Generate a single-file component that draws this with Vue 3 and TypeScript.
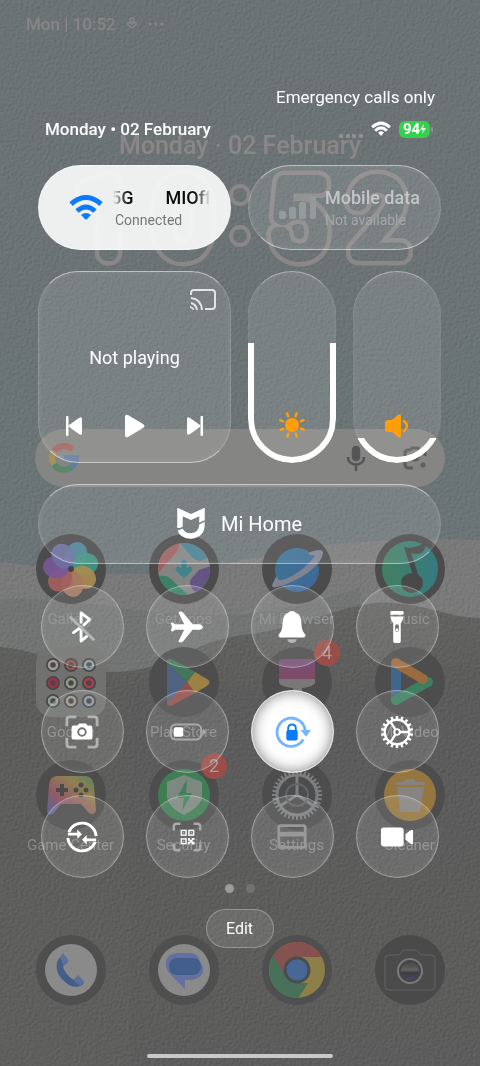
<script setup lang="ts">
import { computed, ref } from 'vue'

const brightness = ref<number>(63)
const volume = ref<number>(13)
const brightnessFill = computed(() => ({ height: `${brightness.value}%` }))
const volumeFill = computed(() => ({ height: `${volume.value}%` }))

interface Digit { char: string; x: number }
const digits: Digit[] = [
  { char: '1', x: 105 },
  { char: '0', x: 183 },
  { char: '5', x: 297 },
  { char: '2', x: 378 },
]
const teeth = Array.from({ length: 36 }, (_, i) => i * 10)
const smallTeeth = Array.from({ length: 18 }, (_, i) => i * 20)
const rays = Array.from({ length: 8 }, (_, i) => i * 45 + 22)
const petals = [
  { angle: 20, color: '#4f8799' },
  { angle: 72, color: '#3f9382' },
  { angle: 123, color: '#a98c51' },
  { angle: 174, color: '#a67860' },
  { angle: 226, color: '#a2605f' },
  { angle: 277, color: '#7a5796' },
  { angle: 328, color: '#6a70a0' },
]
const minis = [
  { x: 17, y: 18, color: '#a59a99' }, { x: 35, y: 18, color: '#96544f' }, { x: 53, y: 18, color: '#8b9aa2' },
  { x: 17, y: 36, color: '#9c3148' }, { x: 35, y: 36, color: '#909b88' }, { x: 53, y: 36, color: '#a83f50' },
  { x: 17, y: 54, color: '#8d9f98' }, { x: 35, y: 54, color: '#a29789' }, { x: 53, y: 54, color: '#8a97a8' },
]
</script>

<template>
  <main class="screen">
    <svg class="wallpaper" viewBox="0 0 480 1066" preserveAspectRatio="none" aria-hidden="true">
      <defs>
        <linearGradient id="sky" x1="0" y1="0" x2="0" y2="1">
          <stop offset="0" stop-color="#697173" /><stop offset="1" stop-color="#6a7475" />
        </linearGradient>
        <linearGradient id="hillNear" x1="0" y1="0" x2="0" y2="1">
          <stop offset="0" stop-color="#616160" /><stop offset=".2" stop-color="#5b5b5a" /><stop offset="1" stop-color="#5d5d5c" />
        </linearGradient>
        <filter id="paper" x="0" y="0" width="100%" height="100%" color-interpolation-filters="sRGB">
          <feTurbulence type="fractalNoise" baseFrequency=".36" numOctaves="2" seed="4" result="n" />
          <feDiffuseLighting in="n" surfaceScale="1" diffuseConstant="1" lighting-color="#c6c6c6">
            <feDistantLight azimuth="225" elevation="45" />
          </feDiffuseLighting>
        </filter>
      </defs>
      <rect width="480" height="1066" fill="url(#sky)" />
      <path d="M0 562C40 566 75 573 120 574C210 576 255 552 325 545C370 540 430 538 480 540V1066H0Z" fill="#777877" />
      <path d="M0 599C70 596 120 612 190 614C260 619 300 606 360 588V1066H0Z" fill="#707372" />
      <path d="M0 647C45 650 70 672 115 672C170 671 190 640 250 634C310 626 350 600 390 603C430 605 450 618 480 618V1066H0Z" fill="url(#hillNear)" />
      <path d="M130 680C220 665 250 710 330 695C390 680 420 660 480 668V1066H130Z" fill="#5a5a59" opacity=".5" />
      <rect class="grain" width="480" height="1066" filter="url(#paper)" />
    </svg>

    <section class="home" aria-label="Home screen">
      <div class="home-status">
        <span>Mon | 10:52</span>
        <svg width="12" height="14" viewBox="0 0 12 14" fill="none" stroke="currentColor" stroke-width="1.5"><circle cx="6" cy="3" r="2" /><path d="M6 11L2 8C1 5 4 5 6 7C8 5 11 5 10 8Z" /></svg>
        <svg width="16" height="4" viewBox="0 0 16 4" fill="currentColor"><circle cx="2" cy="2" r="1.5" /><circle cx="8" cy="2" r="1.5" /><circle cx="14" cy="2" r="1.5" /></svg>
      </div>
      <p class="home-date">Monday · 02 February</p>
      <svg class="clock" viewBox="0 0 480 118" role="img" aria-label="10:52">
        <defs>
          <mask id="hollow" maskUnits="userSpaceOnUse" x="0" y="0" width="480" height="118">
            <rect width="480" height="118" fill="#fff" />
            <text v-for="d in digits" :key="d.char" class="digit digit-inner" :x="d.x" y="95">{{ d.char }}</text>
          </mask>
        </defs>
        <g mask="url(#hollow)">
          <text v-for="d in digits" :key="d.char" class="digit digit-outer" :x="d.x" y="95">{{ d.char }}</text>
        </g>
        <g fill="none" stroke="#8a8786" stroke-width="4"><circle cx="240" cy="37" r="9" /><circle cx="240" cy="78" r="9" /></g>
      </svg>

      <label class="search">
        <svg width="32" height="32" viewBox="0 0 32 32" fill="none" stroke-width="6">
          <path d="M24.500 7.500A12 12 0 0 0 6 9.500" stroke="#a4645e" /><path d="M6 9.500A12 12 0 0 0 6 22.500" stroke="#a5935a" />
          <path d="M6 22.500A12 12 0 0 0 23 25.500" stroke="#598767" /><path d="M23 25.500A12 12 0 0 0 28 16H16" stroke="#617d9e" />
        </svg>
        <input type="search" aria-label="Search" />
        <svg class="mic" width="20" height="26" viewBox="0 0 20 26" fill="none" stroke="#555" stroke-width="2.500"><rect x="7" y="2" width="6" height="13" rx="3" fill="#555" /><path d="M2 12C2 22 18 22 18 12M10 20V26" /></svg>
        <svg width="26" height="26" viewBox="0 0 26 26" fill="none" stroke="#5c5c5b" stroke-width="3"><path d="M3 11V8Q3 5 6 5H8L10 3H16L18 5H20Q23 5 23 8V11M3 15V19Q3 23 7 23H11" /><circle cx="13" cy="12" r="3" fill="#5c5c5b" /><circle cx="21" cy="20" r="1" /></svg>
      </label>

      <div class="apps">
        <button class="app" type="button">
          <svg viewBox="0 0 70 70"><circle cx="35" cy="35" r="35" fill="#4b4b4b" />
            <ellipse v-for="p in petals" :key="p.angle" cx="35" cy="20" rx="11" ry="13" :fill="p.color" opacity=".93" :transform="`rotate(${p.angle} 35 35)`" />
            <circle cx="35" cy="35" r="3" fill="#484353" /></svg>
          <span>Gallery</span>
        </button>
        <button class="app" type="button">
          <svg viewBox="0 0 70 70"><defs><clipPath id="disc"><circle cx="35" cy="35" r="26" /></clipPath></defs><circle cx="35" cy="35" r="35" fill="#4b4b4b" />
            <g clip-path="url(#disc)"><rect width="70" height="70" fill="#858484" /><path d="M8 40V8H30Q31 15 25 21L14 33Q11 38 8 40Z" fill="#9b605f" /><path d="M30 8L42 22Q49 29 54 26L66 20V0Z" fill="#487f91" /><path d="M65 31L50 36L42 45Q39 50 45 57L62 60Z" fill="#655384" /><path d="M5 44Q14 39 21 44L40 62L20 66Z" fill="#3c8167" /></g>
            <path d="M35 28V40M29 35L35 41L41 35" stroke="#40848b" stroke-width="5" fill="none" stroke-linecap="round" stroke-linejoin="round" /></svg>
          <span>GetApps</span>
        </button>
        <button class="app" type="button">
          <svg viewBox="0 0 70 70"><defs><linearGradient id="planet" x1="0" y1="0" x2="1" y2="1"><stop stop-color="#3d7491" /><stop offset="1" stop-color="#3f6799" /></linearGradient></defs><circle cx="35" cy="35" r="35" fill="#4b4b4b" />
            <circle cx="35" cy="36" r="22" fill="url(#planet)" /><path d="M46 19C54 15 62 15 61 19C60 30 42 44 22 51C13 54 8 55 11 49Q12 45 15 42C16 47 18 47 23 45C36 40 47 30 53 22Q50 21 48 21Z" fill="#7f8291" /></svg>
          <span>Mi Browser</span>
        </button>
        <button class="app" type="button">
          <svg viewBox="0 0 70 70"><defs><linearGradient id="tune"><stop stop-color="#447f61" /><stop offset="1" stop-color="#367a82" /></linearGradient></defs><circle cx="35" cy="35" r="35" fill="#4b4b4b" /><circle cx="35" cy="35" r="28" fill="url(#tune)" />
            <ellipse cx="37" cy="49" rx="11" ry="10" fill="#484948" /><path d="M41 51L29 13Q37 15 43 12Q47 10 51 9Q50 17 46 19Q41 21 36 19L47 52Z" fill="#484948" /></svg>
          <span>Music</span>
        </button>
        <button class="app" type="button">
          <svg viewBox="0 0 70 70"><rect width="70" height="70" rx="16" fill="#717170" /><g v-for="m in minis" :key="`${m.x}-${m.y}`"><circle :cx="m.x" :cy="m.y" r="7" fill="#474747" /><circle :cx="m.x" :cy="m.y" r="4" fill="none" :stroke="m.color" stroke-width="2.500" /></g></svg>
          <span>Google</span>
        </button>
        <button class="app" type="button">
          <svg viewBox="0 0 70 70"><circle cx="35" cy="35" r="35" fill="#4d4d4d" /><path d="M18 12L38 35L18 58Z" fill="#4d6380" /><path d="M18 15Q18 9 25 13L46 25L38 35Z" fill="#44765a" /><path d="M46 25L58 32Q63 35 58 39L46 46L38 35Z" fill="#9d8143" /><path d="M38 35L46 46L24 58Q18 61 18 56Z" fill="#92504d" /></svg>
          <span>Play Store</span>
        </button>
        <button class="app" type="button">
          <svg viewBox="0 0 70 70"><defs><linearGradient id="theme" x1="0" y1="0" x2="0" y2="1"><stop stop-color="#765278" /><stop offset="1" stop-color="#7e4a63" /></linearGradient></defs><circle cx="35" cy="35" r="35" fill="#4d4d4d" /><path d="M17 15Q17 12 20 12H50Q53 12 53 15V32H17Z" fill="url(#theme)" /><path d="M17 32H53V36Q51 40 40 41V56Q35 62 31 56V41Q19 40 17 36Z" fill="#797878" /></svg>
          <i class="badge">4</i>
        </button>
        <button class="app" type="button">
          <svg viewBox="0 0 70 70"><circle cx="35" cy="35" r="35" fill="#4d4d4d" /><g fill="none" stroke-width="10" stroke-linecap="round"><path d="M21 17V53" stroke="#3f668b" /><path d="M21 53L53 35" stroke="#3e7f60" /><path d="M21 16L48 32" stroke="#996b3e" /></g></svg>
          <span>Mi Video</span>
        </button>
        <button class="app" type="button">
          <svg viewBox="0 0 70 70"><defs><linearGradient id="pad" x1="0" y1="1" x2="1" y2="0"><stop stop-color="#54679a" /><stop offset=".35" stop-color="#925b66" /><stop offset=".7" stop-color="#918052" /><stop offset="1" stop-color="#52815e" /></linearGradient></defs><circle cx="35" cy="35" r="35" fill="#4d4d4d" /><path d="M20 16H50Q57 17 58 25L60 51Q57 57 52 52L45 44H25L18 53Q12 57 11 51L13 25Q14 17 20 16Z" fill="url(#pad)" /><path d="M26 24V36M20 30H32" stroke="#4b4b4b" stroke-width="4" /><g fill="#4b4b4b"><circle cx="45" cy="25" r="2.500" /><circle cx="45" cy="35" r="2.500" /><circle cx="40" cy="30" r="2.500" /><circle cx="50" cy="30" r="2.500" /></g></svg>
          <span>Game Center</span>
        </button>
        <button class="app" type="button">
          <svg viewBox="0 0 70 70"><circle cx="35" cy="35" r="35" fill="#4d4d4d" /><circle cx="35" cy="35" r="26" fill="#3f7d55" /><path d="M35 15L53 22V38Q50 48 35 55Q20 48 18 38V22Z" fill="#7d8880" /><path d="M38 19L28 38H35L33 51L43 33H37Z" fill="#41805a" /></svg>
          <i class="badge">2</i>
          <span>Security</span>
        </button>
        <button class="app" type="button">
          <svg viewBox="0 0 70 70"><circle cx="35" cy="35" r="35" fill="#4d4d4d" /><g stroke="#7d7f80" fill="none" stroke-width="3"><circle cx="35" cy="35" r="20" /><path d="M35 35V15M35 35L18 46M35 35L52 46" /><circle cx="35" cy="35" r="11" stroke="#626466" stroke-width="2" /><path v-for="t in teeth" :key="t" d="M35 10V15" stroke-width="2" :transform="`rotate(${t} 35 35)`" /></g></svg>
          <span>Settings</span>
        </button>
        <button class="app" type="button">
          <svg viewBox="0 0 70 70"><circle cx="35" cy="35" r="35" fill="#4d4d4d" /><circle cx="35" cy="35" r="26" fill="#957640" /><path d="M22 27H49L45 51Q45 52 43 52H27Q25 52 25 50Z" fill="#868481" /><path d="M22 22H29L31 19H39L41 22H48Q50 22 50 25H21Q21 22 22 22Z" fill="#868481" /></svg>
          <span>Cleaner</span>
        </button>
      </div>

      <nav class="dock" aria-label="Dock">
        <button class="app" type="button" aria-label="Phone">
          <svg viewBox="0 0 70 70"><circle cx="35" cy="35" r="35" fill="#4f4f4f" /><circle cx="35" cy="35" r="26" fill="#8a8a8a" /><path d="M27 20C18 25 19 38 27 45C34 53 43 54 48 48L42 42L38 45C32 42 28 36 27 31L32 27Z" fill="#435f89" /><path d="M27 18L33 26L28 31L24 23ZM42 40L48 46L44 51L37 45Z" fill="#5f6f9b" /></svg>
        </button>
        <button class="app" type="button" aria-label="Messages">
          <svg viewBox="0 0 70 70"><circle cx="35" cy="35" r="35" fill="#4f4f4f" /><circle cx="35" cy="35" r="26" fill="#8a8a8a" /><path d="M27 18H42Q50 19 51 27Q56 32 53 39Q49 45 40 45H36V54L22 40Q16 35 17 26Q19 19 27 18Z" fill="#6470a0" /><rect x="20" y="23" width="32" height="17" rx="8" fill="#425f8b" /></svg>
        </button>
        <button class="app" type="button" aria-label="Chrome">
          <svg viewBox="0 0 70 70"><defs><clipPath id="wheel"><circle cx="35" cy="35" r="28" /></clipPath></defs><circle cx="35" cy="35" r="35" fill="#4f4f4f" /><g clip-path="url(#wheel)"><rect width="70" height="70" fill="#8d7f48" /><path d="M11 21L0 0H70V22H35L23 42Z" fill="#855250" /><path d="M11 20L24 42L35 48H46L32 70H0V10Z" fill="#48715a" /></g><circle cx="35" cy="35" r="12" fill="#476894" stroke="#494d52" stroke-width="3" /></svg>
        </button>
        <button class="app" type="button" aria-label="Camera">
          <svg viewBox="0 0 70 70"><defs><linearGradient id="lens" x1="0" y1="0" x2="0" y2="1"><stop stop-color="#454545" /><stop offset=".45" stop-color="#626262" /><stop offset=".6" stop-color="#3c3c42" /><stop offset="1" stop-color="#4e4765" /></linearGradient></defs><circle cx="35" cy="35" r="35" fill="#4a4a4a" /><path d="M14 20H22Q25 20 26 18L28 15H42L44 18Q45 20 48 20H56Q60 20 60 24V51Q60 55 56 55H14Q10 55 10 51V24Q10 20 14 20Z" fill="#4b4b4b" stroke="#636363" /><circle cx="35" cy="36" r="12" fill="#444" stroke="#777a80" stroke-width="2" /><circle cx="35" cy="36" r="9" fill="url(#lens)" /></svg>
        </button>
      </nav>
      <div class="gesture-bar"></div>
    </section>

    <section class="center" aria-label="Control center">
      <p class="carrier">Emergency calls only</p>
      <header class="topline">
        <span class="today">Monday • 02 February</span>
        <span class="system">
          <svg class="nosim" width="24" height="6" viewBox="0 0 24 6" fill="#8d9192"><rect width="4" height="4" rx="1" /><rect x="7" width="4" height="4" rx="1" /><rect x="13" width="4" height="4" rx="1" /><rect x="20" width="4" height="4" rx="1" /></svg>
          <svg width="20" height="16" viewBox="0 0 34 26" fill="none" stroke="#fff" stroke-width="5"><path d="M2 10Q17 -4 32 10M7 16Q17 6 27 16" /><path d="M12 19Q17 15 22 19L17 25Z" fill="#fff" stroke="none" /></svg>
          <span class="battery">94<svg width="6" height="10" viewBox="0 0 6 10" fill="#fff"><path d="M4 0L0 6H3L2 10L6 4H3Z" /></svg></span>
        </span>
      </header>

      <div class="tiles">
        <button class="tile pill wifi" type="button" aria-pressed="true">
          <svg width="34" height="26" viewBox="0 0 34 26" fill="none" stroke="#0a7bff" stroke-width="5"><path d="M2 9Q17 -4 32 9M8 16Q17 8 26 16" /><path d="M12 20Q17 16 22 20L18 24Q17 25 16 24Z" fill="#0a7bff" stroke="none" /></svg>
          <span class="words"><span class="marquee"><b>5G</b><b>MIOff</b></span><small>Connected</small></span>
        </button>
        <button class="tile pill mobile" type="button" aria-pressed="false">
          <svg width="38" height="26" viewBox="0 0 38 26" fill="#959a9b"><rect y="16" width="7" height="8" rx="2" /><rect x="10" y="12" width="7" height="12" rx="2" /><rect x="20" y="7" width="7" height="17" rx="2" /><rect x="31" y="1" width="6" height="23" rx="2" /></svg>
          <span class="words"><b>Mobile data</b><small>Not available</small></span>
        </button>

        <div class="tile media">
          <button class="cast" type="button" aria-label="Cast">
            <svg width="26" height="22" viewBox="0 0 26 22" fill="none" stroke="#e3e5e5" stroke-width="2"><path d="M1 6V4Q1 1 4 1H22Q25 1 25 4V17Q25 20 22 20H15M1 9Q11 10 12 21M1 14Q6 15 7 21" /><path d="M0 17Q4 18 4 21H3Q2 19 0 19Z" fill="#e3e5e5" stroke="none" /></svg>
          </button>
          <p>Not playing</p>
          <div class="controls">
            <button type="button" aria-label="Previous"><svg width="16" height="20" viewBox="0 0 16 20" fill="#fff"><rect width="2.500" height="20" rx="1" /><path d="M3 9L13 2Q16 0 16 3V17Q16 20 13 18L3 11Q2 10 3 9Z" /></svg></button>
            <button type="button" aria-label="Play"><svg width="20" height="24" viewBox="0 0 20 24" fill="#fff"><path d="M0 3Q0 0 3 1L18 10Q21 12 18 14L3 23Q0 24 0 21Z" /></svg></button>
            <button type="button" aria-label="Next"><svg width="16" height="20" viewBox="0 0 16 20" fill="#fff"><rect x="13.500" width="2.500" height="20" rx="1" /><path d="M13 9L3 2Q0 0 0 3V17Q0 20 3 18L13 11Q14 10 13 9Z" /></svg></button>
          </div>
        </div>
        <label class="tile slider">
          <span class="fill" :style="brightnessFill"><span class="rim"></span></span>
          <svg width="28" height="28" viewBox="0 0 28 28" fill="#ff9d0a"><circle cx="14" cy="14" r="7" /><path v-for="r in rays" :key="r" d="M14 1.500V4.500" stroke="#ff9d0a" stroke-width="2.500" stroke-linecap="round" :transform="`rotate(${r} 14 14)`" /></svg>
          <input v-model.number="brightness" type="range" min="0" max="100" aria-label="Brightness" />
        </label>
        <label class="tile slider">
          <span class="fill" :style="volumeFill"><span class="rim"></span></span>
          <svg width="24" height="26" viewBox="0 0 24 26" fill="#ff9d0a"><path d="M3 7H7L13 2Q16 0 16 3V22Q16 26 13 24L7 19H3Q0 19 0 16V10Q0 7 3 7Z" /><path d="M19 8Q25 13 19 18" fill="none" stroke="#ff9d0a" stroke-width="2.500" stroke-linecap="round" /></svg>
          <input v-model.number="volume" type="range" min="0" max="100" aria-label="Volume" />
        </label>

        <button class="tile mihome" type="button">
          <svg width="28" height="32" viewBox="0 0 28 32" fill="none" stroke="#fff" stroke-width="5.500"><path d="M3 20V4L14 9L25 4V14" /><path d="M3 21Q5 28 14 28Q25 27 25 16V13" /><path d="M0 22L7 19M21 16L28 13" stroke="#787f81" stroke-width="1.500" /></svg>
          <span>Mi Home</span>
        </button>

        <button class="tile round" type="button" aria-label="Bluetooth"><svg viewBox="0 0 36 36" fill="none" stroke="#fff" stroke-width="3" stroke-linejoin="round"><path d="M17 13V3L26 10L20 16M9 24L17 18M17 21V33L23 28" stroke-linecap="round" /><path d="M5 7L31 32" stroke="#b5b6b6" /></svg></button>
        <button class="tile round" type="button" aria-label="Airplane mode"><svg viewBox="0 0 36 36" fill="#fff"><path d="M1 14Q3 12 5 15H15L9 3Q11 0 14 3L24 15H32Q38 18 32 21H24L14 33Q11 36 9 33L15 21H5Q3 24 1 22L2 18Z" /></svg></button>
        <button class="tile round" type="button" aria-label="Silent mode"><svg viewBox="0 0 36 36" fill="#fff"><path d="M18 1Q21 1 22 3Q28 5 28 14Q28 22 32 26Q33 29 30 29H6Q3 29 4 26Q8 22 8 14Q8 5 14 3Q15 1 18 1Z" /><path d="M13 31H23Q22 35 18 35Q14 35 13 31Z" fill="#b7b7b7" /></svg></button>
        <button class="tile round" type="button" aria-label="Flashlight"><svg viewBox="0 0 36 36" fill="#fff"><rect x="11" y="1" width="14" height="4" rx="1" /><path d="M11 7H25Q24 12 22 14V33Q22 35 20 35H16Q14 35 14 33V14Q12 12 11 7Z" /><rect x="16" y="15" width="4" height="8" rx="2" fill="#737373" /><circle cx="18" cy="21" r="1.500" fill="#fff" /></svg></button>

        <button class="tile round" type="button" aria-label="Screenshot"><svg viewBox="0 0 36 36" fill="none" stroke="#b2b2b2" stroke-width="3"><path d="M2 12V5Q2 2 5 2H12M24 2H31Q34 2 34 5V12M34 24V31Q34 34 31 34H24M12 34H5Q2 34 2 31V24" /><path d="M9 11H13L15 9H22L24 11H27Q29 11 29 13V24Q29 26 27 26H9Q7 26 7 24V13Q7 11 9 11Z" fill="#fff" stroke="none" /><circle cx="18" cy="18" r="4" stroke="#737373" stroke-width="2" /></svg></button>
        <button class="tile round" type="button" aria-label="Battery saver"><svg viewBox="0 0 36 36"><rect x="1" y="10" width="32" height="16" rx="5" fill="none" stroke="#aaa" stroke-width="2" /><path d="M35 14L38 18L35 22Z" fill="#aaa" /><rect x="4" y="13" width="10" height="10" rx="2" fill="#fff" /></svg></button>
        <button class="tile round active" type="button" aria-label="Rotation lock" aria-pressed="true"><svg viewBox="0 0 36 36" fill="none"><path d="M30 26A15 15 0 1 1 32 16" stroke="#74b5ff" stroke-width="3" /><path d="M27 16H38L33 23Z" fill="#74b5ff" /><rect x="12" y="16" width="12" height="11" rx="2" fill="#087bff" /><path d="M14 17V14Q14 10 18 10Q22 10 22 14V17" stroke="#087bff" stroke-width="2" /></svg></button>
        <button class="tile round" type="button" aria-label="Settings"><svg viewBox="0 0 36 36" fill="none" stroke="#fff" stroke-width="2.500"><circle cx="18" cy="18" r="13" /><circle cx="18" cy="18" r="3" stroke-width="2" /><path d="M21 18H31M16 15L11 7M16 21L11 29" /><path v-for="t in smallTeeth" :key="t" d="M18 1V5" :transform="`rotate(${t} 18 18)`" /></svg></button>

        <button class="tile round" type="button" aria-label="Interconnectivity"><svg viewBox="0 0 36 36" fill="none" stroke="#fff" stroke-width="3"><path d="M4 13A15 15 0 0 1 33 17M32 23A15 15 0 0 1 3 19" /><path d="M3 15H15M33 21H21" /><path d="M13 10L18 15L13 20ZM23 16L18 21L23 26Z" fill="#fff" stroke="none" /></svg></button>
        <button class="tile round" type="button" aria-label="Scanner"><svg viewBox="0 0 36 36" fill="none" stroke="#aaa" stroke-width="2.500"><path d="M4 11V7Q4 4 7 4H11M25 4H29Q32 4 32 7V11M32 25V29Q32 32 29 32H25M11 32H7Q4 32 4 29V25" /><g stroke="#fff" stroke-width="1.500"><rect x="12" y="11" width="5" height="5" /><rect x="20" y="11" width="5" height="5" /><rect x="12" y="20" width="5" height="5" /></g><path d="M19 19H21V21H23V19H26V21H24V23H26V26H23V24H21V26H19V23H21V22H19ZM14 13H15V14H14ZM22 13H23V14H22ZM14 22H15V23H14Z" fill="#fff" stroke="none" /></svg></button>
        <button class="tile round" type="button" aria-label="Wallet"><svg viewBox="0 0 36 36" fill="none" stroke="#999" stroke-width="3"><rect x="4" y="6" width="28" height="23" rx="2" /><path d="M4 15H32" stroke-width="5" /></svg></button>
        <button class="tile round" type="button" aria-label="Screen recorder"><svg viewBox="0 0 36 36" fill="#fff"><rect x="1" y="8" width="24" height="20" rx="3" /><path d="M27 15L32 11Q35 9 35 12V24Q35 27 32 25L27 21Z" /></svg></button>
      </div>

      <div class="pages"><i class="on"></i><i></i></div>
      <button class="edit" type="button">Edit</button>
    </section>
  </main>
</template>

<style>
body {
  margin: 0;
  background: #5c5c5b;
}
</style>

<style scoped>
.screen {
  position: relative;
  display: grid;
  min-height: 100vh;
  overflow: hidden;
  font-family: Roboto, "Liberation Sans", sans-serif;
  color: #fff;
}
button {
  margin: 0;
  padding: 0;
  border: 0;
  background: none;
  color: inherit;
  font: inherit;
}
p { margin: 0; }
svg { flex: none; }
.wallpaper {
  position: absolute;
  width: 100%;
  height: 100%;
}
.grain {
  mix-blend-mode: soft-light;
  opacity: 0.3;
}
.home,
.center {
  position: relative;
  grid-area: 1 / 1;
  min-width: 0;
  display: flex;
  flex-direction: column;
}

/* Home screen */
.home {
  color: #8a8989;
  padding-bottom: 8px;
}
.home-status {
  display: flex;
  align-items: center;
  gap: 10px;
  padding: 12px 26px 0;
  font-size: 17px;
  font-weight: 500;
  line-height: 24px;
  color: #888685;
}
.home-date {
  margin-top: 98px;
  text-align: center;
  font-size: 25px;
  font-weight: 500;
  line-height: 24px;
  color: #8a8786;
}
.clock {
  width: 100%;
  height: 118px;
}
.digit {
  font-family: Roboto, sans-serif;
  font-size: 99px;
  font-weight: 100;
  text-anchor: middle;
  stroke-linejoin: round;
  stroke-linecap: round;
}
.digit-outer {
  fill: #8a8786;
  stroke: #8a8786;
  stroke-width: 25px;
}
.digit-inner {
  fill: #000;
  stroke: #000;
  stroke-width: 16px;
}
.search {
  display: flex;
  align-items: center;
  height: 58px;
  margin: 153px 35px 0;
  padding: 0 17px 0 13px;
  box-sizing: border-box;
  border-radius: 29px;
  background: #858584;
}
.search input {
  flex: 1;
  min-width: 0;
  border: 0;
  outline: 0;
  background: none;
}
.mic { margin-right: 36px; }
.apps,
.dock {
  display: grid;
  grid-template-columns: repeat(4, 1fr);
  grid-auto-rows: 97px;
  row-gap: 16px;
  padding: 0 14px;
}
.dock { grid-auto-rows: 70px; }
.apps { margin-top: 47px; }
.dock { margin-top: 78px; }
.app {
  position: relative;
  display: flex;
  flex-direction: column;
  align-items: center;
  gap: 3px;
  min-width: 0;
  font-size: 15px;
  line-height: 24px;
  white-space: nowrap;
}
.app svg {
  width: 70px;
  height: 70px;
}
.badge {
  position: absolute;
  top: -7px;
  right: 13px;
  width: 26px;
  height: 26px;
  border-radius: 50%;
  background: #9b4e48;
  color: #a4a09f;
  font-size: 18px;
  font-style: normal;
  line-height: 26px;
  text-align: center;
}
.gesture-bar {
  width: 186px;
  height: 4px;
  margin: 49px auto 0;
  border-radius: 2px;
  background: #c9c9c9;
}

/* Control center */
.center { padding: 87px 39px 0 38px; }
.carrier {
  margin-right: 6px;
  text-align: right;
  font-size: 17px;
  line-height: 20px;
}
.topline {
  display: flex;
  justify-content: space-between;
  margin: 11px 8px 25px 7px;
  line-height: 22px;
}
.today {
  font-size: 17px;
  font-weight: 500;
}
.system {
  display: flex;
  align-items: center;
  gap: 8px;
}
.nosim { align-self: flex-end; }
.battery {
  position: relative;
  display: flex;
  align-items: center;
  justify-content: center;
  width: 31px;
  height: 17px;
  margin-right: 3px;
  border-radius: 6px;
  background: #34d14d;
  font-size: 15px;
  font-weight: 700;
}
.battery::after {
  content: "";
  position: absolute;
  right: -3px;
  width: 2px;
  height: 5px;
  border-radius: 1px;
  background: #8f9596;
}
.tiles {
  display: grid;
  grid-template-columns: repeat(4, 1fr);
  grid-template-rows: 85px 192px 80px 84px 84px 84px;
  gap: 21px 17px;
}
.tile {
  position: relative;
  box-sizing: border-box;
  border: 1px solid rgba(255, 255, 255, 0.16);
  background: rgba(255, 255, 255, 0.1);
  box-shadow: inset 0 0 5px rgba(255, 255, 255, 0.1);
}
.pill {
  grid-column: span 2;
  display: flex;
  align-items: center;
  border-radius: 43px;
  border-top-color: rgba(255, 255, 255, 0.5);
  border-bottom-color: rgba(255, 255, 255, 0.5);
  padding-left: 30px;
  text-align: left;
}
.wifi {
  gap: 12px;
  background: rgba(246, 248, 248, 0.94);
  color: #0b0b0b;
}
.mobile {
  gap: 8px;
  color: #c3c6c7;
}
.words {
  display: flex;
  flex-direction: column;
  min-width: 0;
  font-size: 18px;
}
.words b {
  font-weight: 500;
  line-height: 24px;
}
.words small {
  font-size: 14px;
  line-height: 20px;
}
.wifi small { color: #767878; }
.mobile small { color: #a3a7a8; }
.marquee {
  display: flex;
  gap: 32px;
  width: 99px;
  margin-left: -4px;
  overflow: hidden;
  mask-image: linear-gradient(90deg, transparent 2px, #000 16px, #000 84px, transparent);
}
.media {
  grid-column: span 2;
  display: flex;
  flex-direction: column;
  border-radius: 40px;
  border-top-color: rgba(255, 255, 255, 0.5);
  border-bottom-color: rgba(255, 255, 255, 0.5);
}
.cast {
  align-self: flex-end;
  height: 22px;
  margin: 17px 14px 0 0;
}
.media p {
  margin-top: 34px;
  text-align: center;
  font-size: 18px;
  line-height: 26px;
}
.controls {
  display: flex;
  align-items: center;
  justify-content: space-between;
  margin: 43px 27px 0;
}
.controls button { display: flex; }
.slider {
  display: flex;
  align-items: flex-end;
  justify-content: center;
  border-radius: 44px;
  border-top-color: rgba(255, 255, 255, 0.4);
  overflow: hidden;
  border-width: 1px 0 0;
}
.slider svg {
  position: relative;
  margin-bottom: 24px;
}
.fill {
  position: absolute;
  left: 0;
  right: 0;
  bottom: 0;
  overflow: hidden;
}
.rim {
  position: absolute;
  left: 0;
  right: 0;
  bottom: 0;
  height: 192px;
  box-sizing: border-box;
  border: 6px solid #fff;
  border-radius: 44px;
}
.slider input {
  position: absolute;
  left: 0;
  top: 0;
  width: 100%;
  height: 100%;
  margin: 0;
  opacity: 0;
  writing-mode: vertical-lr;
  direction: rtl;
}
.mihome {
  grid-column: 1 / -1;
  display: flex;
  align-items: center;
  justify-content: center;
  gap: 16px;
  border-radius: 40px;
  border-top-color: rgba(255, 255, 255, 0.5);
  border-bottom-color: rgba(255, 255, 255, 0.45);
  font-size: 20px;
}
.round {
  justify-self: center;
  display: flex;
  align-items: center;
  justify-content: center;
  width: 83px;
  height: 83px;
  border-radius: 50%;
  border-color: rgba(255, 255, 255, 0.35);
}
.round svg {
  width: 34px;
  height: 34px;
  overflow: visible;
}
.active {
  background: #fff;
  border-color: #e2e2e2;
  box-shadow: inset 0 0 14px rgba(0, 0, 0, 0.5);
}
.pages {
  display: flex;
  justify-content: center;
  gap: 12px;
  margin-top: 5px;
}
.pages i {
  width: 9px;
  height: 9px;
  border-radius: 50%;
  background: #727271;
}
.pages .on { background: #9b9b9b; }
.edit {
  align-self: center;
  width: 68px;
  height: 39px;
  margin-top: 16px;
  border: 1px solid rgba(255, 255, 255, 0.28);
  border-radius: 20px;
  background: rgba(255, 255, 255, 0.1);
  font-size: 16px;
}
</style>
